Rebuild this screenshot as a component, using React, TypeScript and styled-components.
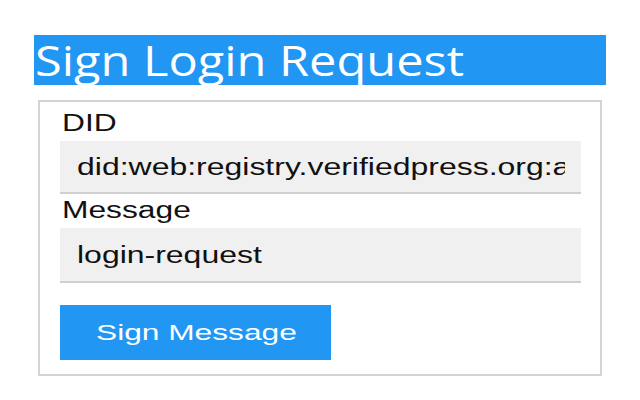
import React from "react";
import styled, { createGlobalStyle } from "styled-components";

const Global = createGlobalStyle`
  html, body { margin: 0; padding: 0; background: #ffffff; }
  body { font-family: "Liberation Sans", Arial, sans-serif; color: #111111; }
`;

const Page = styled.div`
  padding: 35px 34px 0 34px;
  width: 572px;
`;

const TitleBar = styled.h1`
  margin: 0;
  height: 50px;
  background: #2196f3;
  color: #ffffff;
  font-family: "Open Sans", "Noto Sans", sans-serif;
  font-weight: 400;
  font-size: 42px;
  line-height: 50px;
  padding-left: 1px;
  white-space: nowrap;
`;

const Stretch = styled.span<{ $x: number }>`
  display: inline-block;
  transform: scaleX(${(p) => p.$x});
  transform-origin: left center;
  white-space: nowrap;
`;

const Card = styled.div`
  margin: 15px 4px 0 4px;
  border: 2px solid #d4d4d4;
  padding: 8px 19px 14px 20px;
  display: flex;
  flex-direction: column;
`;

const Label = styled.div`
  font-size: 23px;
  line-height: 26px;
  padding-left: 2px;
  color: #111111;
`;

const Field = styled.div<{ $h: number }>`
  height: ${(p) => p.$h}px;
  background: #f0f0f0;
  border-bottom: 2px solid #d0d0d0;
  padding: 0 16px 0 17px;
  display: flex;
  align-items: center;
  font-size: 23px;
  color: #111111;
  margin: 5px 0 3px 0;
`;

const Clip = styled.div`
  flex: 1;
  overflow: hidden;
  padding-top: 2px;
`;

const Button = styled.button`
  margin-top: 19px;
  width: 271px;
  height: 55px;
  background: #2196f3;
  border: none;
  color: #ffffff;
  font-family: "Liberation Sans", Arial, sans-serif;
  font-size: 22px;
  text-align: left;
  padding: 0 0 0 36px;
  cursor: pointer;
`;

export default function App() {
  return (
    <>
      <Global />
      <Page>
        <TitleBar>
          <Stretch $x={1.16}>Sign Login Request</Stretch>
        </TitleBar>
        <Card>
          <Label>
            <Stretch $x={1.38}>DID</Stretch>
          </Label>
          <Field $h={51}>
            <Clip>
              <Stretch $x={1.39}>did:web:registry.verifiedpress.org:alice</Stretch>
            </Clip>
          </Field>
          <Label>
            <Stretch $x={1.38}>Message</Stretch>
          </Label>
          <Field $h={53}>
            <Clip>
              <Stretch $x={1.39}>login-request</Stretch>
            </Clip>
          </Field>
          <Button type="button">
            <Stretch $x={1.44}>Sign Message</Stretch>
          </Button>
        </Card>
      </Page>
    </>
  );
}
